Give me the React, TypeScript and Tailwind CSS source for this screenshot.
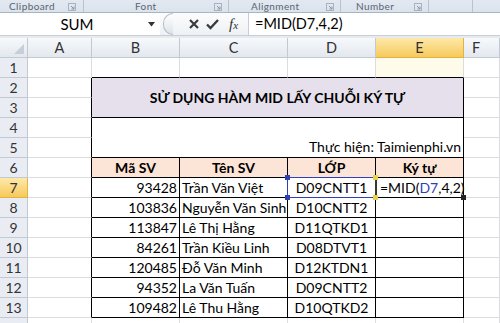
import React from "react";

const GRID = "border-r border-b border-[#dadcdd]";
const TBL = "border-r border-b border-black";
const RH = "flex items-center justify-center border-r border-b border-[#c2c9d3] bg-[#e9edf3] text-[#333] text-[14px]";
const CH = "flex items-center justify-center border-r border-b border-[#c2c9d3] bg-gradient-to-b from-[#f7f9fb] to-[#e3e8ee] text-[#333] text-[14.5px]";

const data: [string, string, string][] = [
  ["93428", "Trần Văn Việt", "D09CNTT1"],
  ["103836", "Nguyễn Văn Sinh", "D10CNTT2"],
  ["113847", "Lê Thị Hằng", "D11QTKD1"],
  ["84261", "Trần Kiều Linh", "D08DTVT1"],
  ["120485", "Đỗ Văn Minh", "D12KTDN1"],
  ["94352", "La Văn Tuấn", "D09CNTT2"],
  ["109482", "Lê Thu Hằng", "D10QTKD2"],
];

function Launcher() {
  return (
    <svg width="8" height="8" viewBox="0 0 8 8" className="shrink-0">
      <rect x="0.5" y="0.5" width="7" height="7" fill="none" stroke="#a9b3bf" />
      <path d="M3 3 L6 6 M6 3.5 V6 H3.5" stroke="#8a96a5" fill="none" />
    </svg>
  );
}

function Group({ label, width, pl, launcherPad }: { label: string; width: number; pl: number; launcherPad: number }) {
  return (
    <div className="flex h-full items-end border-r border-[#b9c3cf]" style={{ width }}>
      <div className="flex-1 flex items-center h-full" style={{ paddingLeft: pl }}>
        <span className="leading-[12px] text-[10px] tracking-[0.4px] text-[#5a6470] whitespace-nowrap">{label}</span>
      </div>
      {launcherPad >= 0 && (
        <div className="h-full flex items-end pb-[1px]" style={{ paddingRight: launcherPad }}>
          <Launcher />
        </div>
      )}
    </div>
  );
}

export default function App() {
  return (
    <div className="w-[500px] h-[323px] overflow-hidden bg-white font-['Lato','Noto_Sans',sans-serif] flex flex-col">
      {/* Ribbon bottom */}
      <div className="h-[13px] flex bg-gradient-to-b from-[#e3e9f1] to-[#dbe3ec] border-b border-[#aab4c1] shrink-0">
        <Group label="Clipboard" width={84} pl={9} launcherPad={7} />
        <Group label="Font" width={145} pl={51} launcherPad={6} />
        <Group label="Alignment" width={112} pl={22} launcherPad={6} />
        <Group label="Number" width={88} pl={15} launcherPad={6} />
        <Group label="" width={44} pl={0} launcherPad={-1} />
        <div className="flex-1" />
      </div>
      {/* Formula bar */}
      <div className="h-[23px] flex bg-white shrink-0 border-b border-[#c8ced6]">
        <div className="w-[160px] flex items-center">
          <span className="flex-1 text-center text-[15px] text-black pl-[6px]">SUM</span>
          <svg width="8" height="5" viewBox="0 0 8 5" className="mr-[4px]">
            <path d="M0 0 H7 L3.5 4.5 Z" fill="#333" />
          </svg>
        </div>
        <div className="w-[88px] flex items-center bg-gradient-to-b from-[#fbfcfd] to-[#eef1f4]">
          <div className="w-[10px] h-[22px] rounded-l-full border border-r-0 border-[#b7bec8] bg-gradient-to-b from-[#ffffff] to-[#dde2e8] ml-[3px]" />
          <svg width="12" height="12" viewBox="0 0 12 12" className="ml-[15px]">
            <path d="M2 2 L10 10 M10 2 L2 10" stroke="#3b3b3b" strokeWidth="2.2" />
          </svg>
          <svg width="13" height="12" viewBox="0 0 13 12" className="ml-[6px]">
            <path d="M1 6.5 L4.5 10 L12 2" stroke="#3b3b3b" strokeWidth="2.4" fill="none" />
          </svg>
          <span className="ml-[10px] text-[15px] italic font-['Liberation_Serif',serif] text-[#333] leading-none">
            f<span className="text-[11px]">x</span>
          </span>
        </div>
        <div className="flex-1 flex items-center border-l border-[#c8ced6] pl-[6px] text-[14.5px] text-black">
          =MID(D7,4,2)
        </div>
      </div>
      <div className="h-[2px] bg-[#e7ebf0] shrink-0" />
      {/* Grid */}
      <div className="grid grid-cols-[28px_64px_88px_108px_88px_88px_1fr] auto-rows-[20px] text-[14px] text-black">
        {/* column headers */}
        <div className={CH + " relative"}>
          <svg width="10" height="10" viewBox="0 0 10 10" className="absolute right-[3px] bottom-[3px]">
            <path d="M10 0 V10 H0 Z" fill="#c8ced6" />
          </svg>
        </div>
        <div className={CH}>A</div>
        <div className={CH}>B</div>
        <div className={CH}>C</div>
        <div className={CH}>D</div>
        <div className="flex items-center justify-center border-r border-b border-[#e2b43c] bg-gradient-to-b from-[#fde9a8] to-[#f7c95a] text-[#333] text-[14.5px]">E</div>
        <div className={CH + " justify-start pl-[8px]"}>F</div>

        {/* row 1 */}
        <div className={RH}>1</div>
        <div className={GRID} />
        <div className={GRID + " border-b-black"} />
        <div className={GRID + " border-b-black"} />
        <div className={GRID + " border-b-black"} />
        <div className={GRID + " border-b-black bg-[#fffbea]"} />
        <div className={GRID} />

        {/* rows 2-3 */}
        <div className={RH}>2</div>
        <div className={GRID + " border-r-black"} />
        <div className={TBL + " col-span-4 row-span-2 bg-[#e5e0ec] flex items-center justify-center font-bold text-[14px]"}>
          SỬ DỤNG HÀM MID LẤY CHUỖI KÝ TỰ
        </div>
        <div className={GRID} />
        <div className={RH}>3</div>
        <div className={GRID + " border-r-black"} />
        <div className={GRID} />

        {/* rows 4-5 */}
        <div className={RH}>4</div>
        <div className={GRID + " border-r-black"} />
        <div className={TBL + " col-span-4 row-span-2 flex items-end justify-end pr-[2px] leading-[20px]"}>
          Thực hiện: Taimienphi.vn
        </div>
        <div className={GRID} />
        <div className={RH}>5</div>
        <div className={GRID + " border-r-black"} />
        <div className={GRID} />

        {/* row 6 */}
        <div className={RH}>6</div>
        <div className={GRID + " border-r-black"} />
        <div className={TBL + " bg-[#fce4d6] flex items-center justify-center font-bold"}>Mã SV</div>
        <div className={TBL + " bg-[#fce4d6] flex items-center justify-center font-bold"}>Tên SV</div>
        <div className={TBL + " bg-[#fce4d6] flex items-center justify-center font-bold"}>LỚP</div>
        <div className={TBL + " bg-[#fce4d6] flex items-center justify-center font-bold"}>Ký tự</div>
        <div className={GRID} />

        {/* data rows */}
        {data.map(([id, name, cls], i) => {
          const r = 7 + i;
          const active = r === 7;
          return (
            <React.Fragment key={r}>
              {active ? (
                <div className="flex items-center justify-center border-r border-b border-[#e2b43c] bg-gradient-to-b from-[#fde9a8] to-[#f7c95a] text-[#333]">
                  {r}
                </div>
              ) : (
                <div className={RH}>{r}</div>
              )}
              <div className={GRID + " border-r-black"} />
              <div className={TBL + " flex items-center justify-end pr-[2px]"}>{id}</div>
              <div className={TBL + " flex items-center pl-[2px] whitespace-nowrap overflow-hidden"}>{name}</div>
              {active ? (
                <div className={TBL + " relative flex items-center justify-center"}>
                  <div className="absolute inset-[-1px] border-[1.5px] border-[#2f3fb5] pointer-events-none" />
                  <div className="absolute left-[-3px] top-[-3px] w-[5px] h-[5px] bg-[#2f3fb5]" />
                  <div className="absolute left-[-3px] bottom-[-3px] w-[5px] h-[5px] bg-[#2f3fb5]" />
                  {cls}
                </div>
              ) : (
                <div className={TBL + " flex items-center justify-center"}>{cls}</div>
              )}
              {active ? (
                <div className={TBL + " relative flex items-center pl-[4px] whitespace-nowrap"}>
                  <div className="absolute left-[-1px] top-0 bottom-0 w-[2px] bg-[#3a3a2a]" />
                  <div className="absolute left-[-3px] top-[-3px] w-[5px] h-[5px] bg-[#e8d24a]" />
                  <div className="absolute left-[-3px] bottom-[-3px] w-[5px] h-[5px] bg-[#e8d24a]" />
                  <div className="absolute right-[-3px] bottom-[-3px] w-[5px] h-[5px] bg-[#222]" />
                  <span>
                    =MID(<span className="text-[#2f3fb5]">D7</span>,4,2)
                  </span>
                </div>
              ) : (
                <div className={TBL} />
              )}
              <div className={GRID} />
            </React.Fragment>
          );
        })}

        {/* row 14 (partially visible) */}
        <div className={RH} />
        <div className={GRID} />
        <div className={GRID} />
        <div className={GRID} />
        <div className={GRID} />
        <div className={GRID} />
        <div className={GRID} />
      </div>
    </div>
  );
}
